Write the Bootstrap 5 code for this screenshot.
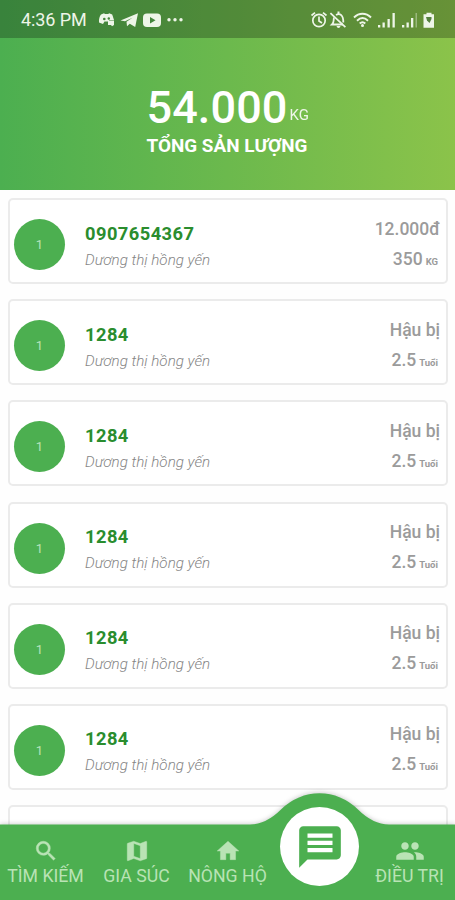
<!DOCTYPE html>
<html lang="vi">
<head>
<meta charset="utf-8">
<meta name="viewport" content="width=device-width, initial-scale=1">
<title>Tổng sản lượng</title>
<link href="https://cdn.jsdelivr.net/npm/bootstrap@5.3.0/dist/css/bootstrap.min.css" rel="stylesheet">
<style>
body{font-family:Roboto,"Noto Sans",sans-serif;height:900px;line-height:1;background:#fefefe;white-space:nowrap}
.hero{height:190px;background:linear-gradient(90deg,#4caf50,#8bc34a)}
.status{height:38px;background:rgba(0,0,0,.25);color:#eef5e8;padding:2px 20px 0 21px}
.clock{font-size:18px;letter-spacing:-.1px}
.status svg{fill:currentColor;display:block}
.notices{margin-left:11px}
.total{padding:45px 0 0 146.500px}
.total-num{font-size:45px;font-weight:500;letter-spacing:.1px;line-height:50px}
.total-unit{font-size:15px;font-weight:400;margin-left:2px;opacity:.88;padding-bottom:10px}
.total-label{font-size:18.900px;font-weight:700;line-height:26px}
.items{padding:8px 7px 0 8px;gap:15.200px}
.item{height:86px;flex:none;border:2px solid #ebebeb;border-radius:5px;background:#fff;padding:0 6px 0 4px}
.dot{width:51px;height:51px;background:#4caf50;color:#b9e3bb;font-size:13px;margin-top:7px}
.texts{padding-top:12px}
.values{padding-top:8px}
.code{font-size:18.300px;font-weight:700;color:#2a8d2e;letter-spacing:.45px;line-height:26px}
.owner{font-size:15.200px;font-weight:300;font-style:italic;color:#858585;line-height:27px}
.val{font-size:17.500px;font-weight:500;color:#9b9b9b;line-height:30px}
.val small{font-size:9.500px;font-weight:700;margin-left:3px;margin-right:2px}
.bar{height:107px}
.bar-shape{filter:drop-shadow(0 -1px 2px rgba(0,0,0,.18))}
.tab{width:91px;color:#b9e3b5;font-size:17.700px;height:76px;padding-top:14px}
.tab svg{fill:currentColor;width:26px;height:26px;margin-bottom:4px}
.tab .people{width:30px;height:30px;margin-top:-2px;margin-bottom:2px}
.fab{width:79px;height:79px;left:280px;top:14px}
</style>
<script src="https://cdn.jsdelivr.net/npm/bootstrap@5.3.0/dist/js/bootstrap.bundle.min.js"></script>
</head>
<body class="d-flex flex-column overflow-hidden position-relative m-0">
<header class="hero flex-shrink-0 text-white">
  <div class="status d-flex justify-content-between align-items-center">
    <div class="d-flex align-items-center">
      <span class="clock">4:36 PM</span>
      <svg class="notices" width="88" height="20" viewBox="0 0 88 20">
        <path d="M3 4.500 6 3.200l1 .9h3.200l1-.9 3 1.300 1.800 5.500h-5v1.500H6.500L5 14 1 12.500C.8 9 1.500 6.500 3 4.500z"/><circle cx="6.300" cy="9" r="1.300" fill="#44863c"/><circle cx="10.800" cy="8.500" r="1.200" fill="#44863c"/><path d="M10 10.500h6V15l-2 1.200-1-1.200h-3z"/>
        <path d="M22.500 10.600 40 3.200 37.200 17l-5.400-3.200-2.800 2.500-.5-4.600 6-4-7.500 3.500z"/>
        <rect x="45" y="3.500" width="18" height="13.500" rx="4"/><path d="m52 7 5.500 3.200L52 13.500z" fill="#44863c"/>
        <circle cx="71" cy="9.800" r="1.700"/><circle cx="77" cy="9.800" r="1.700"/><circle cx="83" cy="9.800" r="1.700"/>
      </svg>
    </div>
    <svg width="126" height="20" viewBox="0 0 126 20">
      <g fill="none" stroke="currentColor" stroke-width="1.700"><circle cx="10" cy="10.500" r="6.200"/><path d="M10 6.500v4.500l3 2M2.500 5.500 6 2.700M17.500 5.500 14 2.700"/></g>
      <path d="m22 2.500 15 14-1.200 1.200-15-14z"/><path fill="none" stroke="currentColor" stroke-width="1.800" d="M25 7.500c-.7 3 .3 5-2 7h11M27 5c4-2.500 7.500.5 7.300 7.500M28.500 2.500h2"/><path d="M27.500 16h4c-.5 2.500-3.500 2.500-4 0z"/>
      <g fill="none" stroke="currentColor" stroke-width="1.900"><path d="M45 7.500c5-5 12-5 17 0M48 10.700c3.500-3.400 7.500-3.400 11 0M50.700 13.500c2-1.800 3.600-1.800 5.600 0"/></g><circle cx="53.500" cy="15.500" r="1.500"/>
      <path d="M69 15h2.300v2.500H69zM73.500 12.500h2.300v5h-2.300zM78.500 9h2.300v8.500h-2.300zM83.500 3h2.300v14.500h-2.300z"/>
      <path d="M93 15h2.300v2.500H93zM97.500 12.500h2.300v5h-2.300zM102 8h2.300v9.500H102z"/><path opacity=".4" d="M106.500 3h1.500v14.500h-1.500z"/>
      <path d="M114.500 4.200h3V2.700h5v1.500h2.500v13.500h-10.500z"/><path d="M117 7h5.500v2l-2 4-2.500-2.500z" fill="#568140"/>
    </svg>
  </div>
  <div class="total">
    <div class="d-flex align-items-end"><span class="total-num">54.000</span><span class="total-unit">KG</span></div>
    <div class="total-label">TỔNG SẢN LƯỢNG</div>
  </div>
</header>
<main class="items d-flex flex-column">
  <div class="item d-flex align-items-center"><div class="dot rounded-circle d-flex align-items-center justify-content-center">1</div><div class="texts ms-3 ps-1"><div class="code">0907654367</div><div class="owner">Dương thị hồng yến</div></div><div class="values ms-auto text-end"><div class="val">12.000đ</div><div class="val d-flex justify-content-end align-items-baseline"><span>350</span><small>KG</small></div></div></div>
  <div class="item d-flex align-items-center"><div class="dot rounded-circle d-flex align-items-center justify-content-center">1</div><div class="texts ms-3 ps-1"><div class="code">1284</div><div class="owner">Dương thị hồng yến</div></div><div class="values ms-auto text-end"><div class="val">Hậu bị</div><div class="val d-flex justify-content-end align-items-baseline"><span>2.5</span><small>Tuổi</small></div></div></div>
  <div class="item d-flex align-items-center"><div class="dot rounded-circle d-flex align-items-center justify-content-center">1</div><div class="texts ms-3 ps-1"><div class="code">1284</div><div class="owner">Dương thị hồng yến</div></div><div class="values ms-auto text-end"><div class="val">Hậu bị</div><div class="val d-flex justify-content-end align-items-baseline"><span>2.5</span><small>Tuổi</small></div></div></div>
  <div class="item d-flex align-items-center"><div class="dot rounded-circle d-flex align-items-center justify-content-center">1</div><div class="texts ms-3 ps-1"><div class="code">1284</div><div class="owner">Dương thị hồng yến</div></div><div class="values ms-auto text-end"><div class="val">Hậu bị</div><div class="val d-flex justify-content-end align-items-baseline"><span>2.5</span><small>Tuổi</small></div></div></div>
  <div class="item d-flex align-items-center"><div class="dot rounded-circle d-flex align-items-center justify-content-center">1</div><div class="texts ms-3 ps-1"><div class="code">1284</div><div class="owner">Dương thị hồng yến</div></div><div class="values ms-auto text-end"><div class="val">Hậu bị</div><div class="val d-flex justify-content-end align-items-baseline"><span>2.5</span><small>Tuổi</small></div></div></div>
  <div class="item d-flex align-items-center"><div class="dot rounded-circle d-flex align-items-center justify-content-center">1</div><div class="texts ms-3 ps-1"><div class="code">1284</div><div class="owner">Dương thị hồng yến</div></div><div class="values ms-auto text-end"><div class="val">Hậu bị</div><div class="val d-flex justify-content-end align-items-baseline"><span>2.5</span><small>Tuổi</small></div></div></div>
  <div class="item"></div>
</main>
<nav class="bar position-absolute bottom-0 start-0 w-100">
  <svg class="bar-shape position-absolute top-0 start-0 overflow-visible" width="455" height="107" viewBox="0 0 455 107"><path fill="#4caf50" d="M0 31.500H250Q266 31.500 281.500 16A54 54 0 0 1 357.500 16Q373 31.500 389 31.500H455V107H0z"/></svg>
  <div class="position-absolute bottom-0 start-0 w-100 d-flex">
    <div class="tab text-center"><svg class="d-block mx-auto" viewBox="0 0 24 24"><path stroke="currentColor" stroke-width=".4" d="M15.500 14h-.79l-.28-.27A6.470 6.470 0 0 0 16 9.500 6.500 6.500 0 1 0 9.500 16c1.610 0 3.090-.59 4.230-1.570l.27.28v.79l5 4.990L20.490 19l-4.990-5zm-6 0C7.010 14 5 11.990 5 9.500S7.010 5 9.500 5 14 7.010 14 9.500 11.990 14 9.500 14z"/></svg>TÌM KIẾM</div>
    <div class="tab text-center"><svg class="d-block mx-auto" viewBox="0 0 24 24"><path stroke="currentColor" stroke-width=".4" d="m20.500 3-.16.030L15 5.100 9 3 3.360 4.900c-.21.070-.36.250-.36.480V20.500c0 .28.220.5.500.5l.16-.030L9 18.900l6 2.100 5.640-1.900c.21-.070.360-.25.360-.48V3.500c0-.28-.22-.5-.5-.5zM15 19l-6-2.110V5l6 2.110V19z"/></svg>GIA SÚC</div>
    <div class="tab text-center"><svg class="d-block mx-auto" viewBox="0 0 24 24"><path stroke="currentColor" stroke-width=".4" d="M10 20v-6h4v6h5v-8h3L12 3 2 12h3v8z"/></svg>NÔNG HỘ</div>
    <div class="tab text-center ms-auto"><svg class="people d-block mx-auto" viewBox="0 0 24 24"><path d="M16 11c1.660 0 2.990-1.340 2.990-3S17.660 5 16 5s-3 1.340-3 3 1.340 3 3 3zm-8 0c1.660 0 2.990-1.340 2.990-3S9.660 5 8 5 5 6.340 5 8s1.340 3 3 3zm0 2c-2.330 0-7 1.170-7 3.500V19h14v-2.500C15 14.170 10.330 13 8 13zm8 0c-.29 0-.62.020-.97.050C16.190 13.890 17 15.020 17 16.500V19h6v-2.500c0-2.330-4.670-3.500-7-3.500z"/></svg>ĐIỀU TRỊ</div>
  </div>
  <div class="fab position-absolute rounded-circle bg-white d-flex align-items-center justify-content-center"><svg width="50" height="50" viewBox="0 0 24 24" fill="#4caf50"><path d="M20 2H4c-1.100 0-1.990.9-1.990 2L2 22l4-4h14c1.100 0 2-.9 2-2V4c0-1.100-.9-2-2-2zm-2 12.500H6v-2h12v2zm0-3.500H6V9h12v2zm0-3.500H6v-2h12v2z"/></svg></div>
</nav>
</body>
</html>
